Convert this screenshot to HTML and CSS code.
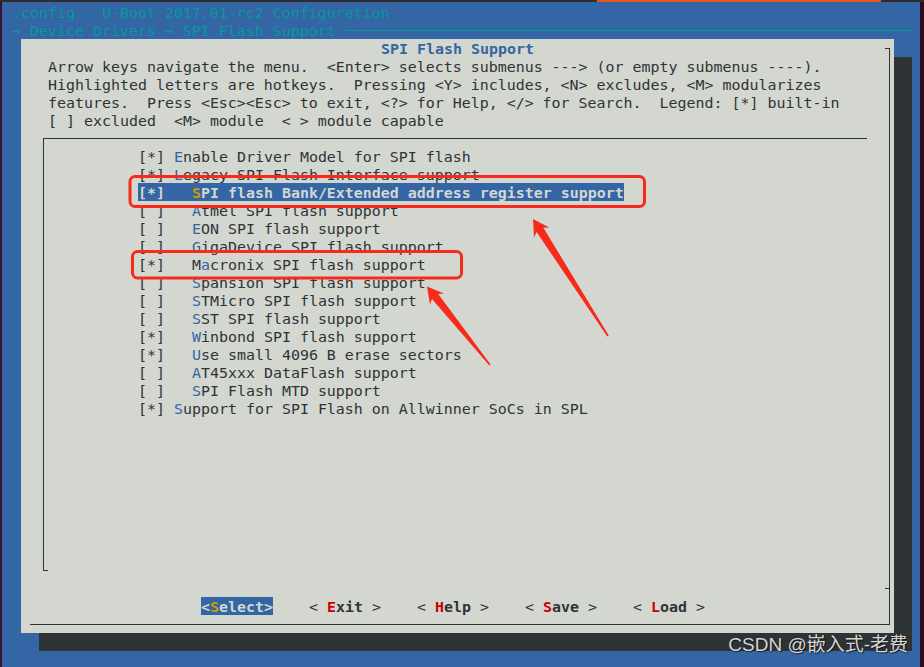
FILE: index.html
```
<!DOCTYPE html>
<html lang="en">
<head>
<meta charset="utf-8">
<title>U-Boot menuconfig</title>
<link rel="stylesheet" href="styles.css">
</head>
<body>
<div class="screen">
  <div class="topbar"><div class="tab"></div></div>
  <div class="main">
    <div class="edge-l"></div>
    <div class="term">
      <div class="hdr">.config - U-Boot 2017.01-rc2 Configuration</div>
      <div class="crumb">
        <span class="crumb-text">→ Device Drivers → SPI Flash Support</span>
        <span class="rule"></span>
      </div>
      <div class="dialog">
        <div class="dtitle">
          <span class="dtitle-text">SPI Flash Support</span>
          <span class="corner"></span>
        </div>
        <div class="dbody">
          <div class="help">
            <div class="line">Arrow keys navigate the menu.  &lt;Enter&gt; selects submenus ---&gt; (or empty submenus ----).</div>
            <div class="line">Highlighted letters are hotkeys.  Pressing &lt;Y&gt; includes, &lt;N&gt; excludes, &lt;M&gt; modularizes</div>
            <div class="line">features.  Press &lt;Esc&gt;&lt;Esc&gt; to exit, &lt;?&gt; for Help, &lt;/&gt; for Search.  Legend: [*] built-in</div>
            <div class="line">[ ] excluded  &lt;M&gt; module  &lt; &gt; module capable</div>
          </div>
          <div class="listbox">
            <div class="item">[*] <span class="hk">E</span>nable Driver Model for SPI flash</div>
            <div class="item">[*] <span class="hk">L</span>egacy SPI Flash Interface support</div>
            <div class="item"><span class="sel">[*]   <span class="hk-sel">S</span>PI flash Bank/Extended address register support</span></div>
            <div class="item">[ ]   <span class="hk">A</span>tmel SPI flash support</div>
            <div class="item">[ ]   <span class="hk">E</span>ON SPI flash support</div>
            <div class="item">[ ]   <span class="hk">G</span>igaDevice SPI flash support</div>
            <div class="item">[*]   M<span class="hk">a</span>cronix SPI flash support</div>
            <div class="item">[ ]   <span class="hk">S</span>pansion SPI flash support</div>
            <div class="item">[ ]   <span class="hk">S</span>TMicro SPI flash support</div>
            <div class="item">[ ]   <span class="hk">S</span>ST SPI flash support</div>
            <div class="item">[*]   <span class="hk">W</span>inbond SPI flash support</div>
            <div class="item">[*]   <span class="hk">U</span>se small 4096 B erase sectors</div>
            <div class="item">[ ]   <span class="hk">A</span>T45xxx DataFlash support</div>
            <div class="item">[ ]   <span class="hk">S</span>PI Flash MTD support</div>
            <div class="item">[*] <span class="hk">S</span>upport for SPI Flash on Allwinner SoCs in SPL</div>
            <div class="lb-foot"></div>
          </div>
          <div class="sep"><span class="sep-stub"></span></div>
          <div class="buttons">
            <span class="btn on">&lt;<span class="bk-on">S</span>elect&gt;</span>
            <span class="btn">&lt; <b><span class="bk">E</span>xit</b> &gt;</span>
            <span class="btn">&lt; <b><span class="bk">H</span>elp</b> &gt;</span>
            <span class="btn">&lt; <b><span class="bk">S</span>ave</b> &gt;</span>
            <span class="btn">&lt; <b><span class="bk">L</span>oad</b> &gt;</span>
          </div>
        </div>
        <div class="dbottom"></div>
      </div>
    </div>
    <div class="edge-r"></div>
  </div>

  <svg class="marks" width="924" height="667" viewBox="0 0 924 667">
    <rect x="130" y="176.5" width="514.5" height="30" rx="5" ry="5" fill="none" stroke="#f72a1c" stroke-width="3"/>
    <rect x="132.5" y="251.5" width="329" height="26.5" rx="5" ry="5" fill="none" stroke="#f72a1c" stroke-width="3"/>
    <polygon fill="#f72a1c" points="533,219 534.0,237.4 536.6,232.1 607.3,336.4 608.7,335.6 543.4,227.7 549.2,227.6"/>
    <polygon fill="#f72a1c" points="427,286.5 430.0,304.6 432.0,299.1 489.4,365.5 490.6,364.5 438.2,294.1 444.0,293.4"/>
  </svg>
  <div class="watermark">CSDN @嵌入式-老费</div>
</div>
</body>
</html>
```

FILE: styles.css
```
* {
  box-sizing: border-box;
}

html,
body {
  margin: 0;
  padding: 0;
}

body {
  width: 924px;
  height: 667px;
  overflow: hidden;
  background: #300a24;
  font-family: "DejaVu Sans Mono", "Liberation Mono", monospace;
  font-size: 14.95px;
  line-height: 20px;
}

.screen {
  position: relative;
  width: 924px;
  height: 667px;
  display: flex;
  flex-direction: column;
}

.topbar {
  height: 2px;
  background: #2e2d2b;
  display: flex;
}

.topbar .tab {
  margin-left: 597px;
  width: 284px;
  background: #e95420;
}

.main {
  flex: 1;
  display: flex;
}

.edge-l {
  width: 2px;
  background: #3b1030;
}

.edge-r {
  width: 4px;
  background: #2c0a22;
}

.term {
  flex: 1;
  background: #3465a4;
  padding: 1px 0 0 1px;
}

.hdr {
  height: 18px;
  color: #06989a;
  padding-left: 9px;
  white-space: pre;
}

.crumb {
  height: 18px;
  display: flex;
  align-items: flex-start;
  color: #06989a;
  padding-left: 9px;
}

.crumb-text {
  white-space: pre;
}

.rule {
  flex: 1;
  height: 1px;
  margin: 9px 8px 0 9px;
  background: #06989a;
}

.dialog {
  margin-left: 18px;
  width: 873px;
  height: 594px;
  background: #d3d7cf;
  color: #2e3436;
  display: flex;
  flex-direction: column;
  box-shadow: 18px 18px 0 0 #2e3436;
}

.dtitle {
  height: 18px;
  display: flex;
}

.dtitle-text {
  margin-left: 360px;
  color: #3465a4;
  font-weight: bold;
  white-space: pre;
}

.corner {
  margin-left: auto;
  margin-right: 4px;
  align-self: flex-end;
  width: 5px;
  height: 9px;
  border-top: 1px solid #2e3436;
  border-right: 1px solid #2e3436;
}

.dbody {
  flex: 1;
  margin-right: 4px;
  border-right: 1px solid #2e3436;
  display: flex;
  flex-direction: column;
}

.help {
  padding-left: 27px;
  display: flex;
  flex-direction: column;
}

.line {
  height: 18px;
  flex: none;
  white-space: pre;
}

.listbox {
  margin: 9px 0 8px 22px;
  width: 824px;
  height: 433px;
  flex: none;
  border-top: 1px solid #2e3436;
  border-left: 1px solid #2e3436;
  padding: 8px 0 0 94px;
  display: flex;
  flex-direction: column;
}

.item {
  height: 18px;
  flex: none;
  white-space: pre;
}

.hk {
  color: #3465a4;
}

.sel {
  display: inline-block;
  height: 18px;
  background: #3465a4;
  color: #d3d7cf;
  font-weight: bold;
}

.hk-sel {
  color: #c4a000;
}

.lb-foot {
  margin-top: auto;
  margin-left: -94px;
  width: 4px;
  height: 1px;
  flex: none;
  background: #2e3436;
}

.sep {
  height: 18px;
  flex: none;
  display: flex;
  justify-content: flex-end;
}

.sep-stub {
  margin-top: 9px;
  width: 4px;
  height: 1px;
  background: #2e3436;
}

.buttons {
  height: 18px;
  flex: none;
  display: flex;
  align-items: flex-start;
  gap: 36px;
  padding-left: 180px;
}

.btn {
  display: inline-block;
  width: 72px;
  height: 18px;
  white-space: pre;
  color: #2e3436;
}

.btn.on {
  background: #3465a4;
  color: #d3d7cf;
  font-weight: bold;
}

.bk {
  color: #cc0000;
}

.bk-on {
  color: #c4a000;
}

.dbottom {
  height: 10px;
  flex: none;
  margin: 0 4px 8px 9px;
  border-bottom: 1px solid #2e3436;
  border-right: 1px solid #2e3436;
}

.marks {
  position: absolute;
  left: 0;
  top: 0;
  pointer-events: none;
}

.watermark {
  position: absolute;
  right: 16px;
  top: 634px;
  font-family: "Liberation Sans", "Noto Sans CJK SC", sans-serif;
  font-size: 19px;
  line-height: 22px;
  color: #d6d6d6;
  text-shadow: 0 0 1px #222, 1px 1px 1px rgba(0, 0, 0, 0.6);
  white-space: nowrap;
}
```
